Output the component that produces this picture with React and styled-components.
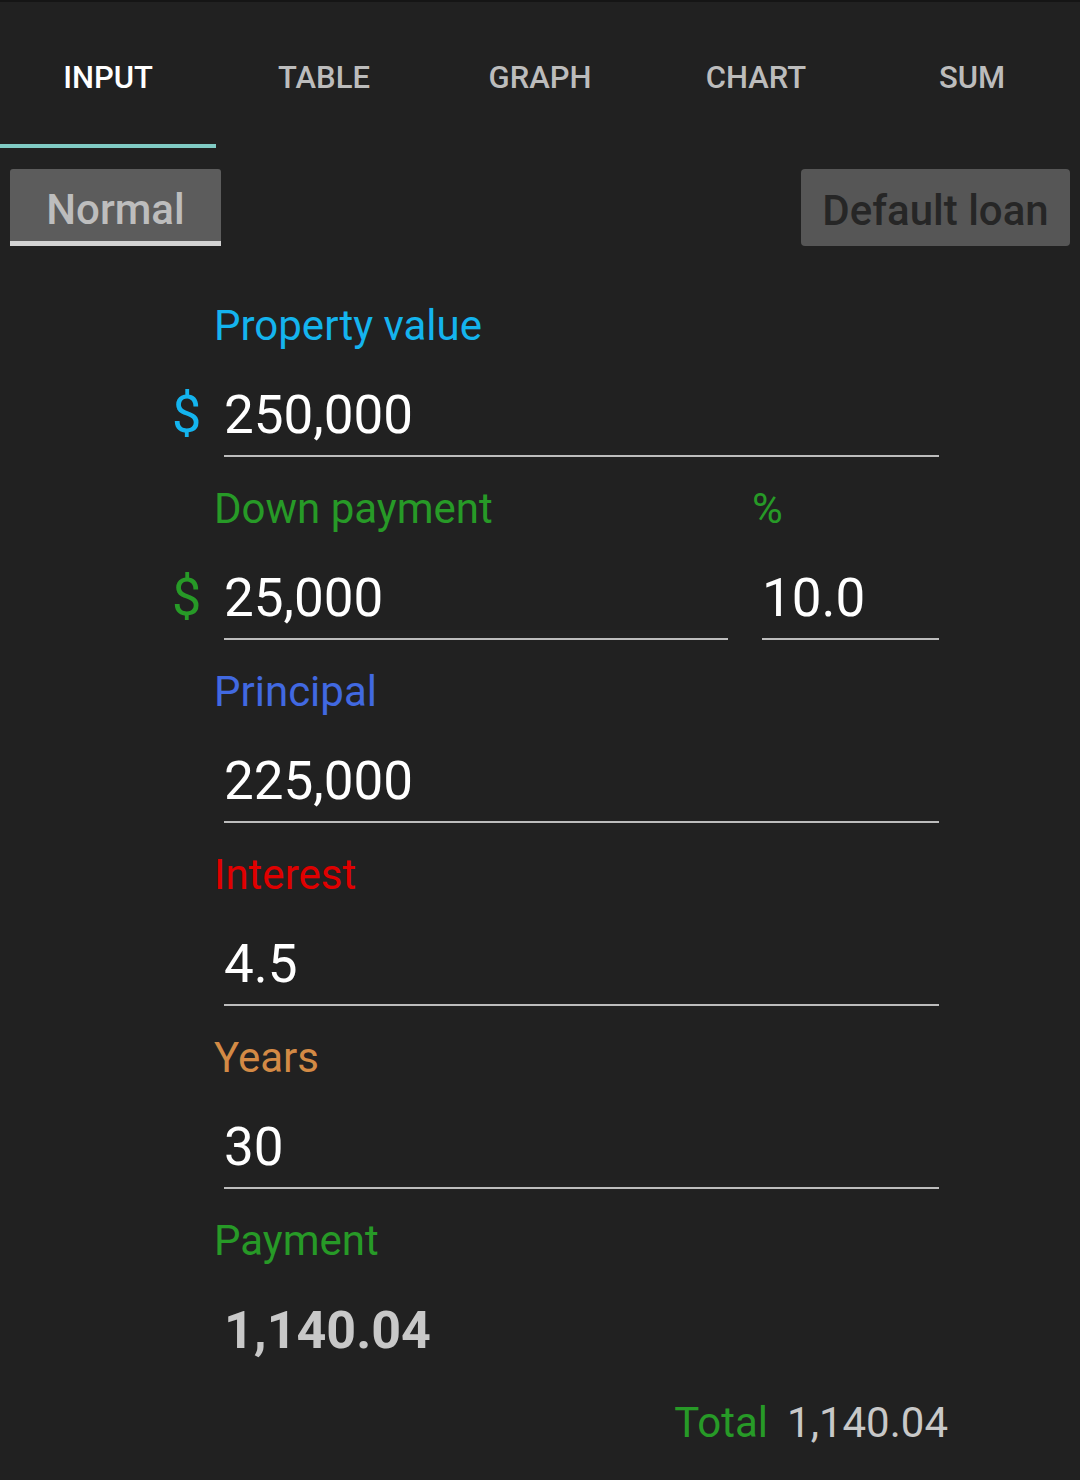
import React from 'react';
import styled, { createGlobalStyle } from 'styled-components';

const GlobalStyle = createGlobalStyle`
  body {
    margin: 0;
    background: #212121;
    font-family: Roboto, "Liberation Sans", sans-serif;
  }
`;

const tabs = ['INPUT', 'TABLE', 'GRAPH', 'CHART', 'SUM'];

const App = () => {
  return (
    <Page>
      <GlobalStyle />
      <TopStrip />
      <TabBar>
        {tabs.map((t, i) => (
          <Tab key={t} active={i === 0}>
            {t}
          </Tab>
        ))}
      </TabBar>
      <ButtonRow>
        <ModeButton>Normal</ModeButton>
        <LoanButton>Default loan</LoanButton>
      </ButtonRow>
      <Form>
        <Field>
          <Label color="#14b4ee">Property value</Label>
          <InputRow>
            <Prefix color="#14b4ee">$</Prefix>
            <InputBox>250,000</InputBox>
          </InputRow>
        </Field>
        <Field>
          <LabelRow>
            <Label color="#279a27" width="578px">Down payment</Label>
            <Label color="#279a27" indent="0">%</Label>
          </LabelRow>
          <InputRow>
            <Prefix color="#279a27">$</Prefix>
            <InputBox width="504px">25,000</InputBox>
            <InputBox width="177px" gap="34px">10.0</InputBox>
          </InputRow>
        </Field>
        <Field>
          <Label color="#4169e1">Principal</Label>
          <InputRow>
            <Prefix />
            <InputBox>225,000</InputBox>
          </InputRow>
        </Field>
        <Field>
          <Label color="#e00000">Interest</Label>
          <InputRow>
            <Prefix />
            <InputBox>4.5</InputBox>
          </InputRow>
        </Field>
        <Field>
          <Label color="#d38a45">Years</Label>
          <InputRow>
            <Prefix />
            <InputBox>30</InputBox>
          </InputRow>
        </Field>
        <Field>
          <Label color="#279a27">Payment</Label>
          <PaymentValue>1,140.04</PaymentValue>
        </Field>
      </Form>
      <TotalRow>
        <TotalLabel>Total</TotalLabel>
        <TotalValue>1,140.04</TotalValue>
      </TotalRow>
    </Page>
  );
};

const Page = styled.div`
  width: 1080px;
  min-height: 1480px;
  background: #212121;
  overflow: hidden;
`;

const TopStrip = styled.div`
  height: 2px;
  background: #151515;
`;

const TabBar = styled.nav`
  display: grid;
  grid-template-columns: repeat(5, 216px);
  height: 146px;
`;

const Tab = styled.div`
  display: flex;
  align-items: center;
  justify-content: center;
  font-size: 31px;
  font-weight: 500;
  color: ${(p) => (p.active ? '#ffffff' : '#bcbcbc')};
  border-bottom: 4px solid ${(p) => (p.active ? '#80cbc4' : 'transparent')};
  padding-top: 8px;
`;

const ButtonRow = styled.div`
  display: flex;
  justify-content: space-between;
  padding: 21px 10px 0;
`;

const ModeButton = styled.div`
  box-sizing: border-box;
  width: 211px;
  height: 77px;
  background: #5c5c5c;
  border-radius: 3px 3px 0 0;
  border-bottom: 5px solid #d3d3d3;
  display: flex;
  align-items: center;
  justify-content: center;
  padding-top: 8px;
  font-size: 42px;
  font-weight: 500;
  color: #bdbdbd;
`;

const LoanButton = styled.div`
  box-sizing: border-box;
  width: 269px;
  height: 77px;
  background: #565656;
  border-radius: 4px;
  display: flex;
  align-items: center;
  justify-content: center;
  padding-top: 5px;
  font-size: 42px;
  font-weight: 500;
  color: #262626;
`;

const Form = styled.div`
  padding-left: 174px;
  display: flex;
  flex-direction: column;
`;

const Field = styled.div`
  margin-top: 28px;
  &:first-child {
    margin-top: 56px;
  }
`;

const LabelRow = styled.div`
  display: flex;
`;

const Label = styled.div`
  box-sizing: border-box;
  width: ${(p) => p.width || 'auto'};
  padding-left: ${(p) => p.indent || '40px'};
  height: 48px;
  line-height: 48px;
  font-size: 42px;
  color: ${(p) => p.color};
`;

const InputRow = styled.div`
  display: flex;
  align-items: flex-end;
  height: 107px;
`;

const Prefix = styled.div`
  width: 50px;
  margin-left: -2px;
  padding-right: 2px;
  padding-bottom: 12px;
  line-height: 60px;
  font-size: 52px;
  color: ${(p) => p.color || 'transparent'};
`;

const InputBox = styled.div`
  box-sizing: border-box;
  width: ${(p) => p.width || '715px'};
  margin-left: ${(p) => p.gap || '0'};
  padding: 0 0 10px 0;
  line-height: 60px;
  font-size: 53px;
  color: #ffffff;
  border-bottom: 2px solid #bdbdbd;
`;

const PaymentValue = styled.div`
  margin: 36px 0 0 50px;
  line-height: 60px;
  font-size: 52px;
  font-weight: 700;
  color: #c8c8c8;
`;

const TotalRow = styled.div`
  display: flex;
  justify-content: flex-end;
  gap: 19px;
  margin-top: 38px;
  padding-right: 132px;
  line-height: 48px;
  font-size: 42px;
`;

const TotalLabel = styled.span`
  color: #279a27;
`;

const TotalValue = styled.span`
  color: #c8c8c8;
`;

export default App;
